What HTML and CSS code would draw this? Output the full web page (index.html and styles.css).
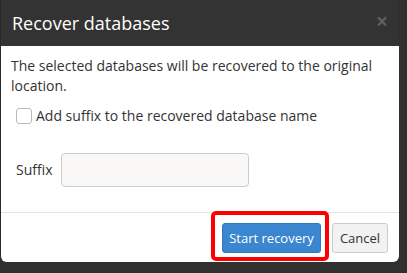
FILE: index.html
```html
<!DOCTYPE html>
<html lang="en">

<head>
    <meta charset="UTF-8">
    <meta name="viewport" content="width=device-width, initial-scale=1.0">
    <title>Recover databases</title>
    <link rel="stylesheet" href="styles.css">
</head>

<body>
    <div class="modal">
        <div class="modal-header">
            <h4 class="modal-title">Recover databases</h4>
            <span class="close">&times;</span>
        </div>
        <div class="modal-body">
            <p class="intro">The selected databases will be recovered to the original location.</p>
            <label class="check-row">
                <span class="checkbox"></span>
                Add suffix to the recovered database name
            </label>
            <div class="field-row">
                <span class="field-label">Suffix</span>
                <input type="text" class="field-input">
            </div>
        </div>
        <div class="modal-footer">
            <span class="highlight-wrap">
                <button class="btn btn-primary">Start recovery</button>
                <span class="highlight"></span>
            </span>
            <button class="btn btn-default">Cancel</button>
        </div>
    </div>
</body>

</html>
```

FILE: styles.css
```css
body {
    margin: 0;
    background-color: #303030;
    font-family: "Open Sans", sans-serif;
    color: #333;
}

.modal {
    width: 398px;
    border-left: 1px solid #2a2a2a;
    background-color: #fff;
    border-radius: 0 0 6px 6px;
}

.modal-header {
    height: 46px;
    padding: 0 11px;
    background-color: #333;
    display: flex;
    align-items: center;
    justify-content: space-between;
}

.modal-title {
    margin: 0;
    font-size: 18px;
    font-weight: normal;
    color: #fff;
}

.close {
    font-size: 21px;
    font-weight: bold;
    color: #5e5e5e;
    line-height: 1;
    margin-top: -4px;
}

.modal-body {
    padding: 10px 11px 0 10px;
    height: 156px;
    font-size: 14px;
    line-height: 20px;
}

.intro {
    margin: 0;
}

.check-row {
    display: flex;
    align-items: center;
    gap: 4px;
    margin: 10px 0 0 5px;
}

.checkbox {
    width: 14px;
    height: 14px;
    border: 1px solid #bbb;
    border-radius: 3px;
    background-color: #fff;
}

.field-row {
    display: flex;
    align-items: center;
    gap: 8px;
    margin: 27px 0 0 5px;
}

.field-input {
    width: 186px;
    height: 32px;
    padding: 0;
    border: 1px solid #ccc;
    border-radius: 4px;
    background-color: #f9f8f7;
}

.modal-footer {
    border-top: 1px solid #e5e5e5;
    padding: 10px 11px 9px;
    display: flex;
    justify-content: flex-end;
    gap: 11px;
}

.highlight-wrap {
    position: relative;
    display: flex;
}

.highlight {
    position: absolute;
    top: -12px;
    left: -11px;
    right: -8px;
    bottom: -8px;
    border: 4px solid #f00;
    border-radius: 5px;
}

.btn {
    height: 30px;
    padding: 0;
    font-family: "Open Sans", sans-serif;
    font-size: 13px;
    white-space: nowrap;
    border-radius: 3px;
    border: 1px solid transparent;
}

.btn-primary {
    width: 99px;
    background-color: #3a87d0;
    border-color: #2f78bd;
    color: #fff;
}

.btn-default {
    width: 56px;
    background-color: #f2f2f2;
    border-color: #ccc;
    color: #333;
}
```
